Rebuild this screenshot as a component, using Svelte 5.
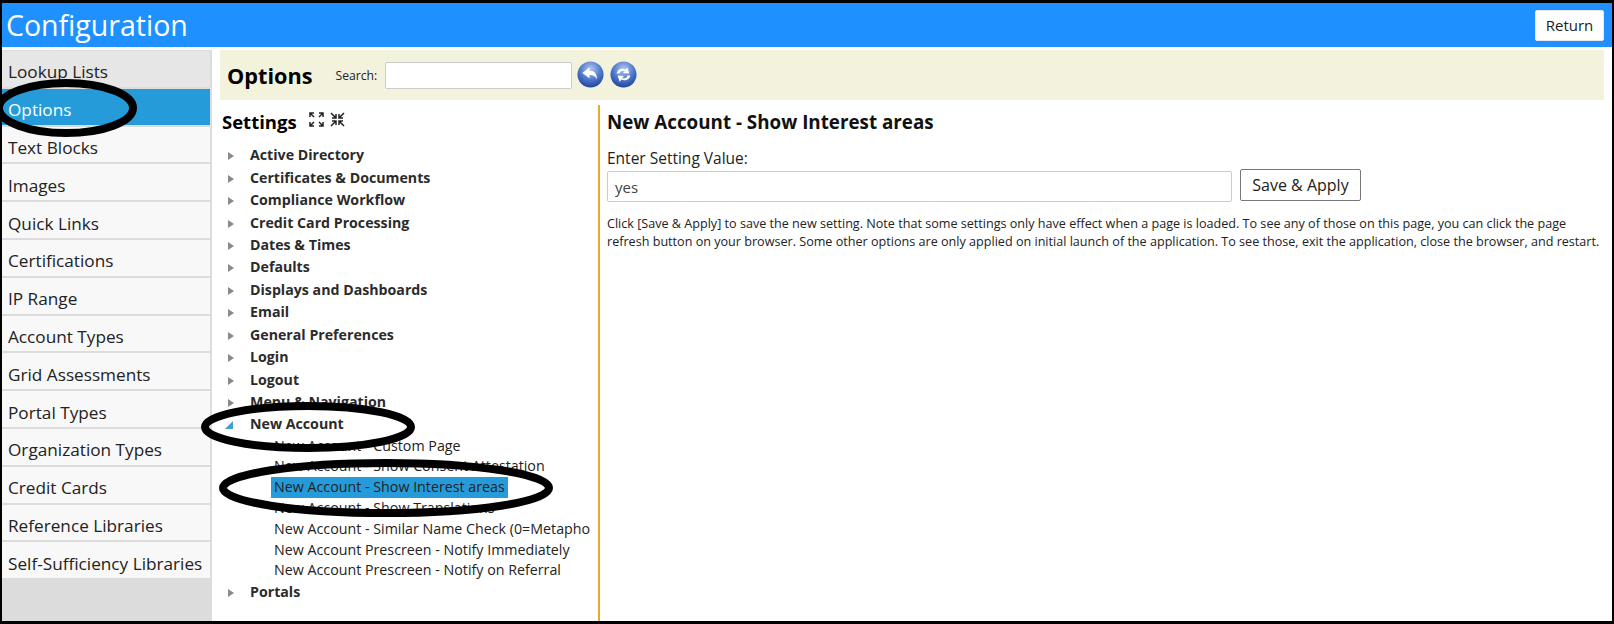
<script>
	const lists = [
		'Lookup Lists',
		'Options',
		'Text Blocks',
		'Images',
		'Quick Links',
		'Certifications',
		'IP Range',
		'Account Types',
		'Grid Assessments',
		'Portal Types',
		'Organization Types',
		'Credit Cards',
		'Reference Libraries',
		'Self-Sufficiency Libraries'
	];

	const groupsBefore = [
		'Active Directory',
		'Certificates & Documents',
		'Compliance Workflow',
		'Credit Card Processing',
		'Dates & Times',
		'Defaults',
		'Displays and Dashboards',
		'Email',
		'General Preferences',
		'Login',
		'Logout',
		'Menu & Navigation'
	];

	const accountSettings = [
		'New Account - Custom Page',
		'New Account - Show Consent Attestation',
		'New Account - Show Interest areas',
		'New Account - Show Translations',
		'New Account - Similar Name Check (0=Metapho',
		'New Account Prescreen - Notify Immediately',
		'New Account Prescreen - Notify on Referral'
	];

	let selected = $state('New Account - Show Interest areas');
	let value = $state('yes');
</script>

<div class="screen">
	<header class="topbar">
		<h1>Configuration</h1>
		<button type="button" class="return">Return</button>
	</header>

	<div class="body">
		<nav class="sidebar">
			{#each lists as item}
				<div class="side-item" class:hovered={item === 'Lookup Lists'} class:active={item === 'Options'}>{item}</div>
			{/each}
		</nav>

		<main class="main">
			<div class="optbar">
				<h2>Options</h2>
				<label for="search">Search:</label>
				<input id="search" class="search" type="text" />
				<svg class="round" viewBox="0 0 28 28" aria-hidden="true">
					<defs>
						<radialGradient id="ball" cx="50%" cy="30%" r="72%">
							<stop offset="0%" stop-color="#b4c8ee" />
							<stop offset="55%" stop-color="#5079cc" />
							<stop offset="100%" stop-color="#1f3f9c" />
						</radialGradient>
					</defs>
					<circle cx="14" cy="14" r="13.5" fill="url(#ball)" />
					<path d="M13 6.500 5.500 12.500 13 18v-3.600c3.500 0 6 1 7.500 4.600 .6-5.500-2.400-9-7.500-9z" fill="#fff" />
				</svg>
				<svg class="round" viewBox="0 0 28 28" aria-hidden="true">
					<circle cx="14" cy="14" r="13.5" fill="url(#ball)" />
					<path d="M7 13c.6-4 5-6.400 9-4.300L18 6.500l2 6.500-6.500-.6 2-2c-2.600-1.100-5 .1-5.700 2.600z" fill="#fff" />
					<path d="M21 15c-.6 4-5 6.400-9 4.300L10 21.500 8 15l6.500.6-2 2c2.600 1.100 5-.1 5.700-2.600z" fill="#fff" />
				</svg>
			</div>

			<div class="panes">
				<section class="tree">
					<div class="tree-head">
						<h3>Settings</h3>
						<svg class="tool" viewBox="0 0 15 15" aria-hidden="true">
							<path d="M1 5V1h4M1 1l4 4M10 1h4v4M14 1l-4 4M1 10v4h4M1 14l4-4M14 10v4h-4M14 14l-4-4" />
						</svg>
						<svg class="tool" viewBox="0 0 15 15" aria-hidden="true">
							<path d="M2 6h4V2M6 6 1 1M9 2v4h4M9 6l5-5M2 9h4v4M6 9l-5 5M13 9H9v4M9 9l5 5" />
						</svg>
					</div>

					{#each groupsBefore as group}
						<div class="group"><span class="caret"></span>{group}</div>
					{/each}

					<div class="group"><span class="caret open"></span>New Account</div>
					{#each accountSettings as setting}
						<div class="leaf"><span class:picked={setting === selected}>{setting}</span></div>
					{/each}
					<div class="group"><span class="caret"></span>Portals</div>
				</section>

				<section class="detail">
					<h4>{selected}</h4>
					<label class="value-label" for="value">Enter Setting Value:</label>
					<div class="value-row">
						<input id="value" class="value" type="text" bind:value />
						<button type="button" class="save">Save &amp; Apply</button>
					</div>
					<p>
						Click [Save &amp; Apply] to save the new setting. Note that some settings only have effect when a page is loaded. To see any of those on this page, you can click the page
						<br />
						refresh button on your browser. Some other options are only applied on initial launch of the application. To see those, exit the application, close the browser, and restart.
					</p>
				</section>
			</div>
		</main>
	</div>

	<!-- hand drawn marks on top of the screenshot -->
	<svg class="marks" viewBox="0 0 1614 624" aria-hidden="true">
		<ellipse cx="66" cy="108" rx="67" ry="25" />
		<ellipse cx="308" cy="427" rx="103" ry="21" />
		<ellipse cx="386" cy="488" rx="163" ry="25" />
	</svg>
</div>

<style>
	:global(body) {
		margin: 0;
		background: #fff;
	}

	.screen {
		position: relative;
		width: 1614px;
		height: 624px;
		box-sizing: border-box;
		border-style: solid;
		border-color: #000;
		border-width: 3px 2px 3px 2px;
		display: flex;
		flex-direction: column;
		overflow: hidden;
		font-family: 'Open Sans', 'Noto Sans', sans-serif;
		color: #222;
		background: #fff;
	}

	.topbar {
		flex: none;
		height: 44px;
		background: #1e90ff;
		display: flex;
		align-items: center;
		justify-content: space-between;
		padding-right: 8px;
	}

	h1 {
		margin: 0 0 0 4px;
		font-size: 28.5px;
		font-weight: 400;
		color: #fff;
	}

	.return {
		width: 69px;
		height: 31px;
		background: #fff;
		border: 1px solid #e8e8e8;
		border-radius: 2px;
		font: inherit;
		font-size: 15px;
		color: #222;
		padding: 0;
	}

	.body {
		flex: 1;
		display: flex;
		min-height: 0;
		padding-top: 3px;
	}

	.sidebar {
		flex: none;
		width: 210px;
		padding: 1px 2px 0 0;
		box-sizing: border-box;
		background: #dcdcdc;
	}

	.side-item {
		height: 37.8px;
		box-sizing: border-box;
		padding: 6px 0 0 6px;
		background: #f8f8f8;
		border-bottom: 2px solid #dcdcdc;
		display: flex;
		align-items: center;
		font-size: 17.2px;
		color: #222;
		white-space: nowrap;
	}

	.side-item.hovered {
		background: #e6e6e6;
	}

	.side-item.active {
		background: #259bd9;
		color: #fff;
	}

	.main {
		flex: 1;
		min-width: 0;
		padding: 0 8px 0 8px;
		display: flex;
		flex-direction: column;
	}

	.optbar {
		flex: none;
		height: 50px;
		box-sizing: border-box;
		background: #f3f3dd;
		display: flex;
		align-items: center;
		padding-left: 7px;
	}

	h2 {
		margin: 0 23px 0 0;
		font-size: 21.7px;
		font-weight: 700;
		color: #000;
	}

	.optbar label {
		font-size: 12.2px;
		margin-right: 8px;
	}

	.search {
		width: 187px;
		height: 27px;
		box-sizing: border-box;
		border: 1px solid #ccc;
		border-radius: 2px;
		background: #fff;
		margin-right: 5px;
	}

	.round {
		width: 27px;
		height: 27px;
		margin: -2px 6px 0 0;
	}

	.panes {
		flex: 1;
		display: flex;
		min-height: 0;
		margin-top: 5px;
		margin-left: -4px;
	}

	.tree {
		width: 382px;
		flex: none;
		overflow: hidden;
		white-space: nowrap;
		padding-left: 6px;
		box-sizing: border-box;
	}

	.tree-head {
		height: 38.5px;
		display: flex;
		align-items: center;
		gap: 6px;
	}

	h3 {
		margin: 0 6px 6px 0;
		font-size: 18.5px;
		font-weight: 700;
		color: #000;
	}

	.tool {
		width: 15px;
		height: 15px;
		margin-bottom: 9px;
	}

	.tool path {
		fill: none;
		stroke: #222;
		stroke-width: 1.5;
	}

	.group {
		height: 22.45px;
		display: flex;
		align-items: center;
		font-size: 14.2px;
		font-weight: 700;
		color: #2b2b2b;
	}

	.caret {
		width: 0;
		height: 0;
		margin: 3px 16px 0 6px;
		border-style: solid;
		border-width: 4.5px 0 4.5px 6px;
		border-color: transparent transparent transparent #8a8a8a;
	}

	.caret.open {
		margin: 3px 17px 0 3px;
		border-width: 0 0 8px 8px;
		border-color: transparent transparent #3d9fd6 transparent;
	}

	.leaf {
		height: 20.8px;
		box-sizing: border-box;
		display: flex;
		align-items: center;
		padding: 1px 0 0 49px;
		font-size: 14.25px;
		color: #222;
	}

	.leaf span {
		padding: 0 3px;
		line-height: 20.8px;
	}

	.leaf .picked {
		background: #259bd9;
	}

	.detail {
		flex: 1;
		min-width: 0;
		border-left: 2px solid #e8a92c;
		padding-left: 7px;
	}

	h4 {
		margin: 4px 0 0;
		font-size: 18.8px;
		font-weight: 700;
		color: #111;
	}

	.value-label {
		display: block;
		margin-top: 12px;
		font-size: 15.5px;
	}

	.value-row {
		display: flex;
		align-items: flex-start;
		gap: 8px;
		margin-top: 2px;
	}

	.value {
		width: 625px;
		height: 31px;
		box-sizing: border-box;
		border: 1px solid #ccc;
		border-radius: 2px;
		padding: 0 7px;
		font: inherit;
		font-size: 15px;
		color: #444;
		background: #fff;
	}

	.save {
		width: 121px;
		height: 32px;
		margin-top: -2px;
		background: #fff;
		border: 1px solid #777;
		border-radius: 2px;
		font: inherit;
		font-size: 16px;
		color: #222;
		padding: 0;
	}

	p {
		margin: 13px 0 0;
		font-size: 12.6px;
		line-height: 17.5px;
		white-space: nowrap;
		color: #222;
	}

	.marks {
		position: absolute;
		left: -2px;
		top: -3px;
		width: 1614px;
		height: 624px;
		pointer-events: none;
	}

	.marks ellipse {
		fill: none;
		stroke: #000;
		stroke-width: 8;
	}
</style>
